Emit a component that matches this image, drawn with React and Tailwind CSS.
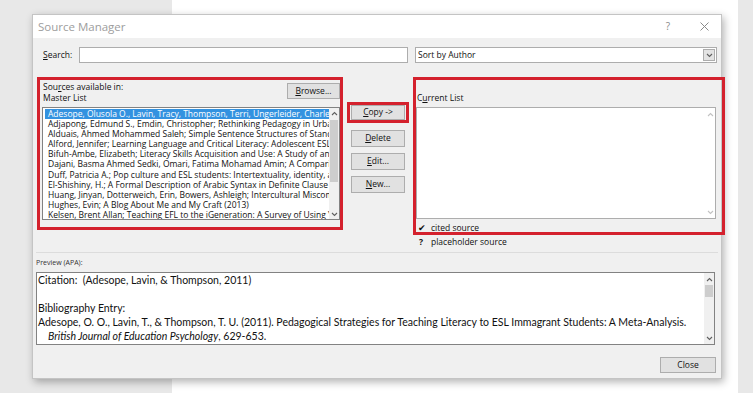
import React from 'react';

// Source Manager dialog over a Word-like backdrop
const UI = { fontFamily: '"Open Sans", "Noto Sans", sans-serif' };
const DOC = { fontFamily: 'Lato, "Liberation Sans", sans-serif' };

const sources = [
  'Adesope, Olusola O., Lavin, Tracy, Thompson, Terri, Ungerleider, Charles; Pedagogical Strategies',
  'Adjapong, Edmund S., Emdin, Christopher; Rethinking Pedagogy in Urban Spaces',
  'Alduais, Ahmed Mohammed Saleh; Simple Sentence Structures of Standard Arabic',
  'Alford, Jennifer; Learning Language and Critical Literacy: Adolescent ESL Students',
  'Bifuh-Ambe, Elizabeth; Literacy Skills Acquisition and Use: A Study of an English',
  'Dajani, Basma Ahmed Sedki, Omari, Fatima Mohamad Amin; A Comparison',
  'Duff, Patricia A.; Pop culture and ESL students: Intertextuality, identity, and',
  'El-Shishiny, H.; A Formal Description of Arabic Syntax in Definite Clause Grammar',
  'Huang, Jinyan, Dotterweich, Erin, Bowers, Ashleigh; Intercultural Miscommunication',
  'Hughes, Evin; A Blog About Me and My Craft (2013)',
  'Kelsen, Brent Allan; Teaching EFL to the iGeneration: A Survey of Using YouTube',
];

const Chevron = ({ up, color = '#606060' }) => (
  <svg width="7" height="5" viewBox="0 0 7 5">
    <path
      d={up ? 'M1 4 L3.5 1.5 L6 4' : 'M1 1 L3.5 3.5 L6 1'}
      fill="none"
      stroke={color}
      strokeWidth="1.1"
    />
  </svg>
);

const Btn = ({ u, rest, className = '' }) => (
  <div
    className={`flex items-center justify-center bg-[#e1e1e1] border border-[#adadad] text-[8.5px] text-[#111] ${className}`}
  >
    <span><span className="underline">{u}</span>{rest}</span>
  </div>
);

export default function App() {
  return (
    <div className="relative w-[753px] h-[393px] overflow-hidden flex" style={UI}>
      <div className="w-[172px] bg-[#e8e8e8]" />
      <div className="w-[566px] bg-white" />
      <div className="flex-1 bg-[#e8e8e8]" />

      {/* dialog window */}
      <div className="absolute left-[32px] top-[14px] w-[690px] h-[365px] border border-[#c4c4c4] bg-[#f0f0f0] shadow-[2px_3px_8px_rgba(0,0,0,0.3)] flex flex-col">
        <div className="h-[23px] bg-white flex items-center justify-between pl-[5px] pr-[12px]">
          <span className="text-[11.5px] text-[#9d9d9d]">Source Manager</span>
          <div className="flex items-center gap-[30px] text-[#8a8a8a]">
            <span className="text-[10px]">?</span>
            <svg width="9" height="9" viewBox="0 0 9 9">
              <path d="M0.5 0.5 L8.5 8.5 M8.5 0.5 L0.5 8.5" stroke="#8a8a8a" strokeWidth="1" />
            </svg>
          </div>
        </div>

        {/* search row */}
        <div className="mt-[9px] h-[16px] flex items-center pl-[10px] text-[8.5px] text-[#111]">
          <span className="w-[36px]"><span className="underline">S</span>earch:</span>
          <div className="w-[329px] h-[16px] bg-white border border-[#adadad]" />
          <div className="ml-[7px] w-[302px] h-[16px] bg-white border border-[#adadad] flex items-center justify-between pl-[2px] pr-px">
            <span>Sort by Author</span>
            <div className="w-[12px] h-[12px] bg-[#e3e3e3] border border-[#adadad] flex items-center justify-center">
              <Chevron />
            </div>
          </div>
        </div>

        {/* lists */}
        <div className="mt-[18px] flex pl-[9px] text-[8.5px] text-[#111]">
          <div className="w-[298px] flex flex-col">
            <div className="flex justify-between">
              <div className="leading-[11px] pl-px">
                <div>Sou<span className="underline">r</span>ces available in:</div>
                <div>Master List</div>
              </div>
              <Btn u="B" rest="rowse..." className="w-[53px] h-[16px] mt-[2px]" />
            </div>
            <div className="mt-[4px] h-[113px] bg-white border border-[#828282] flex">
              <div className="flex-1 min-w-0 overflow-hidden pl-[2px] pt-px">
                {sources.map((s, i) => (
                  <div
                    key={i}
                    className={`whitespace-nowrap leading-[10.1px] pl-[3px] ${i === 0 ? 'bg-[#3392e0] text-white' : ''}`}
                  >
                    {s}
                  </div>
                ))}
              </div>
              <div className="w-[10px] bg-[#f0f0f0] flex flex-col items-center">
                <div className="h-[10px] flex items-center"><Chevron up /></div>
                <div className="mt-[2px] w-[8px] h-[62px] bg-[#cdcdcd]" />
                <div className="flex-1" />
                <div className="h-[10px] flex items-center"><Chevron /></div>
              </div>
            </div>
          </div>

          <div className="ml-[11px] w-[54px] pt-[24px] flex flex-col">
            <Btn u="C" rest="opy ->" className="h-[15px]" />
            <div className="mt-[10px] flex flex-col gap-[6px]">
              <Btn u="D" rest="elete" className="h-[17px]" />
              <Btn u="E" rest="dit..." className="h-[17px]" />
              <Btn u="N" rest="ew..." className="h-[17px]" />
            </div>
          </div>

          <div className="ml-[11px] w-[300px] flex flex-col">
            <div className="pt-[11px] leading-[11px] pl-px">C<span className="underline">u</span>rrent List</div>
            <div className="mt-[4px] h-[112px] bg-white border border-[#adadad] flex justify-end">
              <div className="w-[10px] flex flex-col items-center">
                <div className="h-[12px] flex items-center"><Chevron up color="#c2c2c2" /></div>
                <div className="flex-1" />
                <div className="h-[12px] flex items-center"><Chevron color="#c2c2c2" /></div>
              </div>
            </div>
            <div className="mt-[2px] leading-[14px]">
              <div className="flex">
                <span className="w-[15px] pl-[2px] text-[9px]">✔</span>
                <span>cited source</span>
              </div>
              <div className="flex">
                <span className="w-[15px] pl-[3px] font-bold">?</span>
                <span>placeholder source</span>
              </div>
            </div>
          </div>
        </div>

        <div className="mt-[3px] mx-[3px] h-px bg-[#dcdcdc]" />

        {/* preview */}
        <div className="mt-[5px] pl-[3px] text-[7px] leading-[10px] text-[#333]">Preview (APA):</div>
        <div className="mt-[4px] ml-[3px] w-[679px] h-[73px] bg-white border border-[#828282] flex" >
          <div className="flex-1 min-w-0 overflow-hidden pl-px text-[10.5px] leading-[14px] text-[#111]" style={DOC}>
            <div>Citation:&nbsp; (Adesope, Lavin, &amp; Thompson, 2011)</div>
            <div>&nbsp;</div>
            <div>Bibliography Entry:</div>
            <div className="whitespace-nowrap">
              Adesope, O. O., Lavin, T., &amp; Thompson, T. U. (2011). Pedagogical Strategies for Teaching Literacy to ESL Immagrant Students: A Meta-Analysis.
            </div>
            <div className="pl-[10px]"><span className="italic">British Journal of Education Psychology</span>, 629-653.</div>
          </div>
          <div className="w-[10px] bg-[#f0f0f0] flex flex-col items-center">
            <div className="h-[12px] flex items-center"><Chevron up /></div>
            <div className="w-[8px] h-[12px] bg-[#cdcdcd]" />
            <div className="flex-1" />
            <div className="h-[12px] flex items-center"><Chevron /></div>
          </div>
        </div>

        <div className="mt-[12px] flex justify-end pr-[5px]">
          <Btn u="" rest="Close" className="w-[56px] h-[16px]" />
        </div>
      </div>

      {/* red annotation boxes */}
      <div className="absolute left-[37px] top-[77px] w-[306px] h-[153px] border-[3px] border-[#d4212d]" />
      <div className="absolute left-[347px] top-[102px] w-[62px] h-[21px] border-[3px] border-[#d4212d]" />
      <div className="absolute left-[413px] top-[77px] w-[312px] h-[158px] border-[3px] border-[#d4212d]" />
    </div>
  );
}
